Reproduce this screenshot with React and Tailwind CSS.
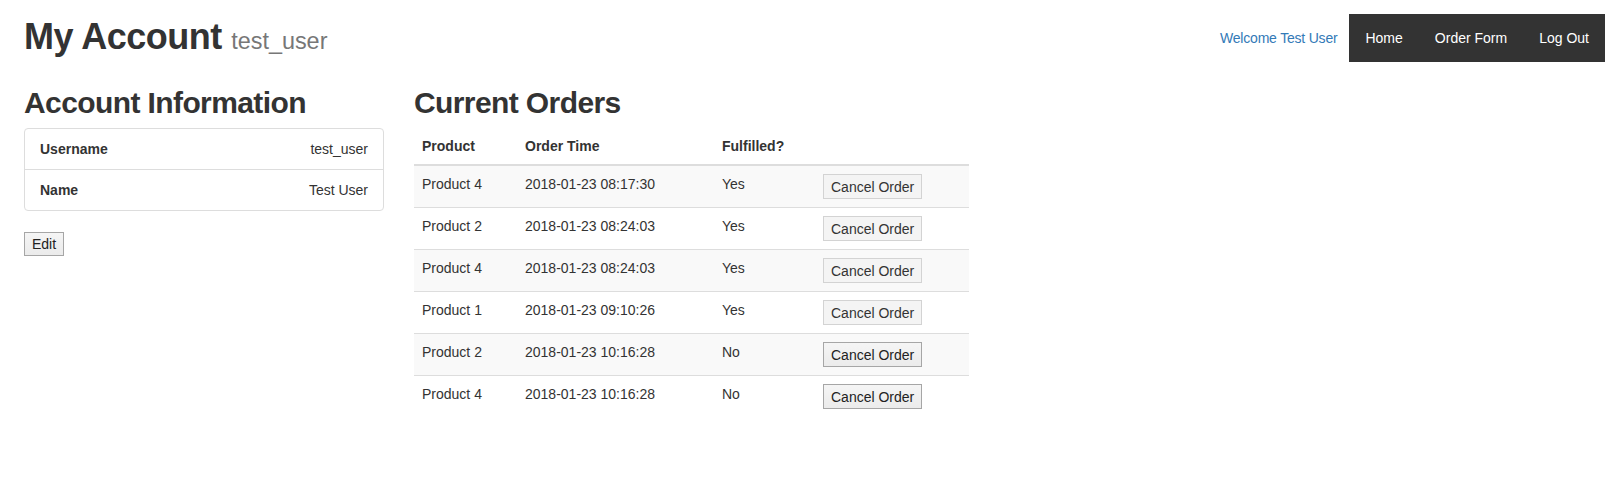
import React from "react";

const orders = [
  { product: "Product 4", time: "2018-01-23 08:17:30", fulfilled: true },
  { product: "Product 2", time: "2018-01-23 08:24:03", fulfilled: true },
  { product: "Product 4", time: "2018-01-23 08:24:03", fulfilled: true },
  { product: "Product 1", time: "2018-01-23 09:10:26", fulfilled: true },
  { product: "Product 2", time: "2018-01-23 10:16:28", fulfilled: false },
  { product: "Product 4", time: "2018-01-23 10:16:28", fulfilled: false },
];

function CancelButton({ disabled }) {
  return (
    <button
      disabled={disabled}
      className={
        disabled
          ? "h-[25px] px-[7px] border border-[#d3d3d3] bg-[#f4f4f4] text-[#333] text-[14px] leading-[20px] flex items-center"
          : "h-[25px] px-[7px] border border-[#a6a6a6] bg-[linear-gradient(#f5f5f5,#ebebeb)] text-[#222] text-[14px] leading-[20px] flex items-center"
      }
    >
      Cancel Order
    </button>
  );
}

export default function App() {
  return (
    <div className="w-[1609px] h-[477px] bg-white text-[#333] text-[14px] leading-[20px] font-['Liberation_Sans',Arial,sans-serif]">
      <header className="flex items-start justify-between">
        <h1 className="ml-[24px] mt-[17px] text-[36px] leading-[40px] font-bold tracking-[-0.5px]">
          My Account{" "}
          <small className="text-[23.4px] font-normal text-[#777] tracking-normal">test_user</small>
        </h1>
        <div className="flex items-center mt-[14px] mr-[4px] h-[48px]">
          <span className="text-[#337ab7] mr-[12px] tracking-[-0.2px]">Welcome Test User</span>
          <nav className="flex bg-[#333] h-[48px]">
            <a className="px-[16px] py-[14px] text-white">Home</a>
            <a className="px-[16px] py-[14px] text-white">Order Form</a>
            <a className="px-[16px] py-[14px] text-white">Log Out</a>
          </nav>
        </div>
      </header>

      <main className="flex gap-[30px] pl-[24px] mt-[24px]">
        <section className="w-[360px]">
          <h2 className="text-[30px] leading-[33px] font-bold tracking-[-0.6px] mb-[9px]">
            Account Information
          </h2>
          <div className="border border-[#ddd] rounded-[4px]">
            <div className="flex justify-between px-[15px] py-[10px] border-b border-[#ddd]">
              <span className="font-bold">Username</span>
              <span>test_user</span>
            </div>
            <div className="flex justify-between px-[15px] py-[10px]">
              <span className="font-bold">Name</span>
              <span>Test User</span>
            </div>
          </div>
          <button className="mt-[21px] h-[24px] px-[7px] border border-[#a6a6a6] bg-[linear-gradient(#f5f5f5,#ebebeb)] text-[#222] text-[14px] leading-[20px] flex items-center">
            Edit
          </button>
        </section>

        <section className="w-[555px]">
          <h2 className="text-[30px] leading-[33px] font-bold tracking-[-0.6px] mb-[9px]">
            Current Orders
          </h2>
          <table className="w-[555px] border-collapse table-fixed">
            <thead>
              <tr className="border-b-2 border-[#ddd]">
                <th className="w-[103px] p-[8px] text-left font-bold align-bottom">Product</th>
                <th className="w-[197px] p-[8px] text-left font-bold align-bottom">Order Time</th>
                <th className="w-[101px] p-[8px] text-left font-bold align-bottom">Fulfilled?</th>
                <th className="w-[154px] p-[8px] text-left font-bold align-bottom"></th>
              </tr>
            </thead>
            <tbody>
              {orders.map((o, i) => (
                <tr
                  key={i}
                  className={
                    i % 2 === 0
                      ? "border-t border-[#ddd] bg-[#f9f9f9]"
                      : "border-t border-[#ddd] bg-white"
                  }
                >
                  <td className="p-[8px] align-top">{o.product}</td>
                  <td className="p-[8px] align-top">{o.time}</td>
                  <td className="p-[8px] align-top">{o.fulfilled ? "Yes" : "No"}</td>
                  <td className="p-[8px] align-top">
                    <CancelButton disabled={o.fulfilled} />
                  </td>
                </tr>
              ))}
            </tbody>
          </table>
        </section>
      </main>
    </div>
  );
}
